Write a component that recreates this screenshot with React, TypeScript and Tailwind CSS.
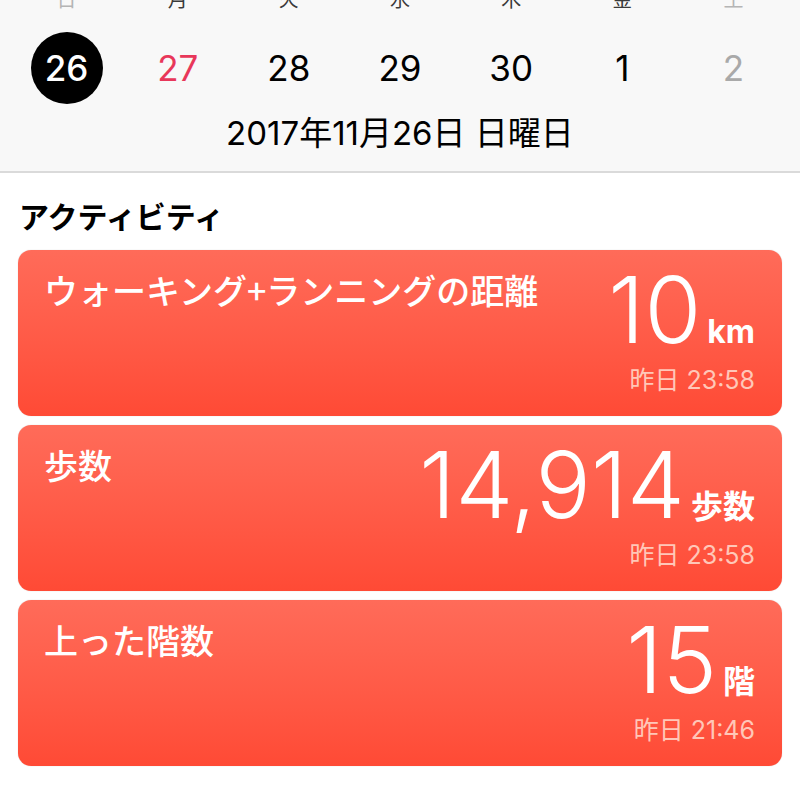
import React from "react";

const FONT = { fontFamily: 'Inter, "Noto Sans CJK JP", sans-serif' };
const JP = { fontFamily: '"Noto Sans CJK JP", sans-serif' };

const weekdays = [
  { w: "日", c: "text-[#b5b5b5]" },
  { w: "月", c: "text-[#3a3a3a]" },
  { w: "火", c: "text-[#3a3a3a]" },
  { w: "水", c: "text-[#3a3a3a]" },
  { w: "木", c: "text-[#3a3a3a]" },
  { w: "金", c: "text-[#3a3a3a]" },
  { w: "土", c: "text-[#b5b5b5]" },
];

const days = [
  { d: "26", c: "text-white", sel: true },
  { d: "27", c: "text-[#e8375a]", sel: false },
  { d: "28", c: "text-black", sel: false },
  { d: "29", c: "text-black", sel: false },
  { d: "30", c: "text-black", sel: false },
  { d: "1", c: "text-black", sel: false },
  { d: "2", c: "text-[#a9a9a9]", sel: false },
];

type CardProps = { title: string; value: string; unit: string; time: string };

function Card({ title, value, unit, time }: CardProps) {
  return (
    <div className="flex h-[166px] justify-between rounded-[13px] bg-linear-to-b from-[#ff6b59] to-[#ff4a35] pl-[26px] pr-[27px] shadow-[0_0_1px_rgba(0,0,0,0.25)]">
      <div
        className="pt-[20px] text-[34px] leading-[40px] font-medium text-white"
        style={JP}
      >
        {title}
      </div>
      <div className="flex flex-col items-end pt-[14px]">
        <div className="flex items-baseline text-white">
          <span
            className="text-[92px] leading-[92px] font-light"
            style={FONT}
          >
            {value}
          </span>
          <span
            className="ml-[6px] text-[32px] leading-[40px] font-bold"
            style={FONT}
          >
            {unit}
          </span>
        </div>
        <div
          className="mt-[9px] text-[25px] leading-[30px] text-[#ffc7b8]"
          style={FONT}
        >
          {time}
        </div>
      </div>
    </div>
  );
}

export default function App() {
  return (
    <div className="h-[793px] w-[800px] overflow-hidden bg-white" style={FONT}>
      <div className="flex h-[173px] flex-col border-b-2 border-[#dadada] bg-[#f8f8f8]">
        <div className="mt-[-11px] grid h-[20px] grid-cols-7 px-[11px]">
          {weekdays.map((w) => (
            <div
              key={w.w}
              className={`text-center text-[20px] leading-[20px] ${w.c}`}
              style={JP}
            >
              {w.w}
            </div>
          ))}
        </div>
        <div className="mt-[23px] grid grid-cols-7 px-[11px]">
          {days.map((d) => (
            <div key={d.d} className="flex justify-center">
              <div
                className={`flex h-[72px] w-[72px] items-center justify-center rounded-full text-[35px] ${d.c} ${
                  d.sel ? "bg-black font-medium" : ""
                }`}
              >
                {d.d}
              </div>
            </div>
          ))}
        </div>
        <div className="mt-[10px] text-center text-[33px] leading-[38px] text-black">
          2017年11月26日 日曜日
        </div>
      </div>
      <div className="px-[18px]">
        <div
          className="pt-[24px] pl-[1px] text-[30px] leading-[36px] font-bold text-black"
          style={JP}
        >
          アクティビティ
        </div>
        <div className="mt-[17px] flex flex-col gap-[9px]">
          <Card
            title="ウォーキング+ランニングの距離"
            value="10"
            unit="km"
            time="昨日 23:58"
          />
          <Card title="歩数" value="14,914" unit="歩数" time="昨日 23:58" />
          <Card title="上った階数" value="15" unit="階" time="昨日 21:46" />
        </div>
      </div>
    </div>
  );
}
